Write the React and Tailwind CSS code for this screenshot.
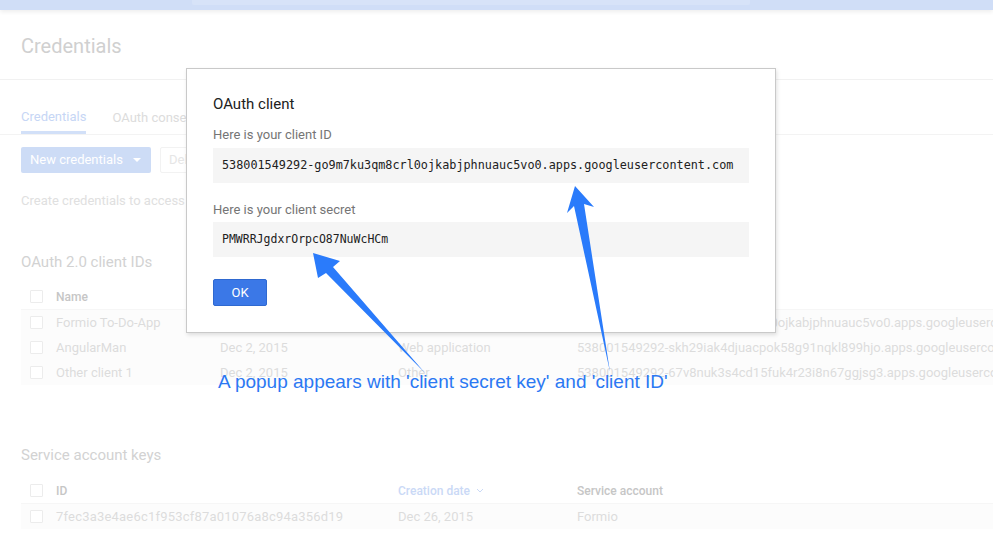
import React from "react";

function Check() {
  return <div className="w-[13px] h-[13px] border border-[#ececec] bg-white rounded-[1px]" />;
}

const clientRows = [
  ["Formio To-Do-App", "Dec 2, 2015", "Web application", "538001549292-go9m7ku3qm8crl0ojkabjphnuauc5vo0.apps.googleusercontent.com"],
  ["AngularMan", "Dec 2, 2015", "Web application", "538001549292-skh29iak4djuacpok58g91nqkl899hjo.apps.googleusercontent.com"],
  ["Other client 1", "Dec 2, 2015", "Other", "538001549292-67v8nuk3s4cd15fuk4r23i8n67ggjsg3.apps.googleusercontent.com"],
];

export default function App() {
  return (
    <div
      className="relative w-[993px] h-[551px] overflow-hidden bg-white"
      style={{ fontFamily: "Roboto, 'Liberation Sans', sans-serif" }}
    >
      {/* top bar */}
      <div className="relative z-10 h-[10px] bg-[#d0def7] shadow-[0_2px_4px_rgba(0,0,0,0.07)]">
        <div className="ml-[192px] w-[558px] h-[5px] bg-[#d7e3f8] rounded-b-[2px]" />
      </div>

      {/* header */}
      <div className="h-[70px] border-b border-[#f1f1f1] px-[21px] flex items-center">
        <div className="text-[20px] text-[#d0d0d0] leading-none pt-[2px]">Credentials</div>
      </div>

      {/* tabs */}
      <div className="h-[55px] border-b border-[#f3f3f3] px-[21px] flex items-end gap-[26px] text-[13px]">
        <div className="pb-[6px] border-b-[3px] border-[#d2e0f8] text-[#c6d6f5] leading-[16px]">Credentials</div>
        <div className="pb-[8px] text-[#dcdcdc] leading-[16px]">OAuth consent screen</div>
        <div className="pb-[8px] text-[#dcdcdc] leading-[16px]">Domain verification</div>
      </div>

      {/* buttons */}
      <div className="px-[21px] mt-[12px] flex gap-[9px]">
        <div className="h-[26px] w-[130px] bg-[#cddcf6] rounded-[2px] text-white text-[13px] flex items-center pl-[9px]">
          New credentials
          <span className="ml-[10px] w-0 h-0 border-l-[4px] border-r-[4px] border-t-[4px] border-l-transparent border-r-transparent border-t-white" />
        </div>
        <div className="h-[26px] px-[8px] border border-[#f2f2f2] rounded-[2px] text-[#e6e6e6] text-[13px] flex items-center">
          Delete
        </div>
      </div>

      <div className="px-[21px] mt-[20px] text-[13px] text-[#e0e0e0] leading-[16px]">
        Create credentials to access your enabled APIs. Refer to the API documentation for details.
      </div>

      <div className="px-[21px] mt-[44px] text-[15px] text-[#d2d2d2] leading-[18px]">OAuth 2.0 client IDs</div>

      {/* client IDs table */}
      <div className="ml-[21px] mt-[13px] text-[13px]">
        <div className="grid grid-cols-[35px_164px_178px_179px_1fr] h-[25px] items-center">
          <div className="pl-[9px]"><Check /></div>
          <div className="text-[12px] font-medium text-[#c6c6c6]">Name</div>
          <div className="text-[12px] font-medium text-[#c6c6c6]">Creation date</div>
          <div className="text-[12px] font-medium text-[#c6c6c6]">Type</div>
          <div className="text-[12px] font-medium text-[#c6c6c6]">Client ID</div>
        </div>
        <div className="bg-[#fcfcfc] border-t border-[#f6f6f6]">
          {clientRows.map((r) => (
            <div key={r[0]} className="grid grid-cols-[35px_164px_178px_179px_1fr] h-[25px] items-center text-[#dcdcdc]">
              <div className="pl-[9px]"><Check /></div>
              <div className="whitespace-nowrap">{r[0]}</div>
              <div className="whitespace-nowrap">{r[1]}</div>
              <div className="whitespace-nowrap">{r[2]}</div>
              <div className="whitespace-nowrap overflow-hidden">{r[3]}</div>
            </div>
          ))}
        </div>
      </div>

      <div className="px-[21px] mt-[61px] text-[15px] text-[#d2d2d2] leading-[18px]">Service account keys</div>

      {/* service account table */}
      <div className="ml-[21px] mt-[14px] text-[13px]">
        <div className="grid grid-cols-[35px_342px_179px_1fr] h-[25px] items-center">
          <div className="pl-[9px]"><Check /></div>
          <div className="text-[12px] font-medium text-[#c6c6c6]">ID</div>
          <div className="text-[12px] font-medium text-[#cad9f6] flex items-center gap-[6px]">
            Creation date
            <svg width="8" height="5" viewBox="0 0 8 5"><path d="M1 1l3 3 3-3" fill="none" stroke="#cad9f6" strokeWidth="1" /></svg>
          </div>
          <div className="text-[12px] font-medium text-[#c6c6c6]">Service account</div>
        </div>
        <div className="grid grid-cols-[35px_342px_179px_1fr] h-[26px] items-center text-[#dcdcdc] bg-[#fcfcfc] border-t border-[#f6f6f6]">
          <div className="pl-[9px]"><Check /></div>
          <div className="tracking-[0.2px]">7fec3a3e4ae6c1f953cf87a01076a8c94a356d19</div>
          <div>Dec 26, 2015</div>
          <div>Formio</div>
        </div>
      </div>

      {/* modal */}
      <div className="absolute left-[186px] top-[68px] w-[590px] border border-[#c9c9c9] bg-white shadow-[1px_2px_4px_rgba(0,0,0,0.12)] px-[26px] pt-[25px] pb-[26px]">
        <div className="text-[15px] leading-[20px] text-[#212121]">OAuth client</div>
        <div className="mt-[13px] text-[13px] leading-[16px] text-[#757575]">Here is your client ID</div>
        <div
          className="mt-[5px] h-[35px] bg-[#f5f5f5] flex items-center px-[9px] text-[11.8px] text-[#212121] whitespace-nowrap"
          style={{ fontFamily: "'DejaVu Sans Mono', 'Liberation Mono', monospace" }}
        >
          538001549292-go9m7ku3qm8crl0ojkabjphnuauc5vo0.apps.googleusercontent.com
        </div>
        <div className="mt-[19px] text-[13px] leading-[16px] text-[#757575]">Here is your client secret</div>
        <div
          className="mt-[4px] h-[35px] bg-[#f5f5f5] flex items-center px-[9px] text-[11.5px] text-[#212121] whitespace-nowrap"
          style={{ fontFamily: "'DejaVu Sans Mono', 'Liberation Mono', monospace" }}
        >
          PMWRRJgdxrOrpcO87NuWcHCm
        </div>
        <div className="mt-[22px] w-[54px] h-[27px] bg-[#3b78e7] border border-[#2f69d0] rounded-[2px] text-white text-[13px] flex items-center justify-center">
          OK
        </div>
      </div>

      {/* annotation arrows */}
      <svg className="absolute left-0 top-0 pointer-events-none" width="993" height="551" viewBox="0 0 993 551">
        <polygon points="313,253 340,261 333,267 425,373 326,273 318,278" fill="#2a7bfb" />
        <polygon points="575,186 594,207 584,204 610,372 574,206 567,213" fill="#2a7bfb" />
      </svg>
      <div
        className="absolute left-[218px] top-[371px] text-[19px] leading-[22px] text-[#2b78f3] whitespace-nowrap"
        style={{ fontFamily: "'Liberation Sans', Arial, sans-serif" }}
      >
        A popup appears with 'client secret key' and 'client ID'
      </div>
    </div>
  );
}
